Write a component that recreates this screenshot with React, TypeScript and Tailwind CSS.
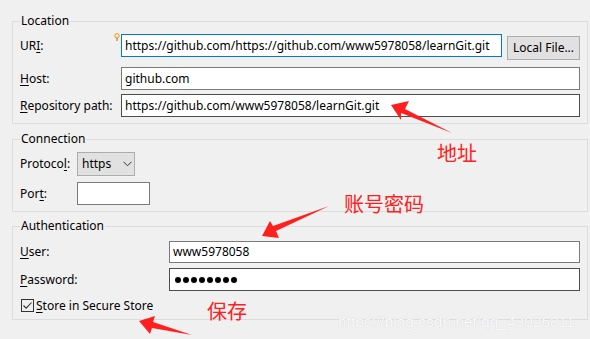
import React from "react";

const font = "font-['Noto_Sans','Noto_Sans_CJK_SC',sans-serif]";

function Label({ pre, u, post, w }: { pre?: string; u: string; post?: string; w: string }) {
  return (
    <div className={`${w} shrink-0 text-[12px] leading-[16px] text-black`}>
      {pre}
      <span className="underline underline-offset-2">{u}</span>
      {post}
    </div>
  );
}

function Input({ value, w, h = "h-[23px]", border = "border-[#7a7a7a]", children }: { value?: string; w: string; h?: string; border?: string; children?: React.ReactNode }) {
  return (
    <div className={`${w} ${h} border ${border} bg-white flex items-center pl-[3px] text-[12px] text-black whitespace-nowrap overflow-hidden`}>
      {value}
      {children}
    </div>
  );
}

export default function App() {
  return (
    <div className={`relative w-[590px] h-[339px] bg-[#f0f0f0] overflow-hidden ${font}`}>
      <div className="flex flex-col pl-[12px]">
        {/* Location */}
        <fieldset className="w-[576px] mt-[13px] border border-[#dcdcdc] px-[7px] pb-[6px]">
          <legend className="px-[1px] text-[12px] leading-[16px] text-black">Location</legend>
          <div className="flex items-start mt-[5px]">
            <div className="h-[23px] flex items-center">
              <Label pre="UR" u="I" post=":" w="w-[101px]" />
            </div>
            <Input value="https://github.com/https://github.com/www5978058/learnGit.git" w="w-[381px]" border="border-[#0078d7]" />
            <div className="ml-[5px] mt-[2px] w-[73px] h-[24px] bg-[#e1e1e1] border border-[#adadad] flex items-center justify-center text-[12px] text-black">
              Local File...
            </div>
          </div>
          <div className="flex items-center mt-[7px]">
            <Label u="H" post="ost:" w="w-[101px]" />
            <Input value="github.com" w="w-[459px]" />
          </div>
          <div className="flex items-center mt-[4px]">
            <Label u="R" post="epository path:" w="w-[101px]" />
            <Input value="https://github.com/www5978058/learnGit.git" w="w-[459px]" border="border-[#4d4d4d]" />
          </div>
        </fieldset>

        {/* Connection */}
        <fieldset className="w-[576px] mt-[7px] border border-[#dcdcdc] px-[7px] pb-[6px]">
          <legend className="px-[1px] text-[12px] leading-[16px] text-black">Connection</legend>
          <div className="flex items-center mt-[5px]">
            <Label pre="Protoco" u="l" post=":" w="w-[57px]" />
            <div className="w-[58px] h-[24px] bg-[#e1e1e1] border border-[#adadad] flex items-center pl-[4px] text-[12px] text-black">
              <span>https</span>
              <svg className="ml-[12px]" width="9" height="6" viewBox="0 0 9 6">
                <path d="M0.5 0.8 L4.5 4.8 L8.5 0.8" fill="none" stroke="#333" strokeWidth="1" />
              </svg>
            </div>
          </div>
          <div className="flex items-center mt-[6px]">
            <Label pre="Por" u="t" post=":" w="w-[57px]" />
            <Input w="w-[73px]" />
          </div>
        </fieldset>

        {/* Authentication */}
        <fieldset className="w-[576px] mt-[6px] border border-[#dcdcdc] px-[7px] pb-[7px]">
          <legend className="px-[1px] text-[12px] leading-[16px] text-black">Authentication</legend>
          <div className="flex items-center mt-[7px]">
            <Label u="U" post="ser:" w="w-[149px]" />
            <Input value="www5978058" w="w-[411px]" h="h-[22px]" />
          </div>
          <div className="flex items-center mt-[5px]">
            <Label u="P" post="assword:" w="w-[149px]" />
            <Input w="w-[411px]" border="border-[#4d4d4d]">
              <div className="flex gap-[2px] ml-[2px]">
                {Array.from({ length: 8 }).map((_, i) => (
                  <span key={i} className="w-[6px] h-[6px] rounded-full bg-black" />
                ))}
              </div>
            </Input>
          </div>
          <div className="flex items-center mt-[8px] h-[13px]">
            <div className="ml-[1px] w-[13px] h-[13px] border border-[#333] bg-[#f0f0f0] flex items-center justify-center">
              <svg width="11" height="11" viewBox="0 0 11 11">
                <path d="M1.5 5.5 L4.2 8.2 L9.5 2.5" fill="none" stroke="#333" strokeWidth="1.1" />
              </svg>
            </div>
            <div className="ml-[2px] text-[12px] leading-[16px] text-black">
              <span className="underline underline-offset-2">S</span>tore in Secure Store
            </div>
          </div>
        </fieldset>
      </div>

      {/* lightbulb decoration */}
      <svg className="absolute left-[114px] top-[33px]" width="6" height="9" viewBox="0 0 6 9">
        <circle cx="3" cy="2.8" r="2.2" fill="#fff3d0" stroke="#e8921c" strokeWidth="1" />
        <path d="M3 5 V8" stroke="#c97a14" strokeWidth="1.2" />
      </svg>

      {/* annotations */}
      <svg className="absolute left-0 top-0 pointer-events-none" width="590" height="339">
        <polygon points="391,105 409,101 405,109 452,133 401,113 401,120" fill="#ff1f1f" />
        <polygon points="262,236 270,221 273,226 329,206 276,231 279,238" fill="#ff1f1f" />
        <polygon points="139,321 155,316 153,322 192,335 152,328 150,334" fill="#ff1f1f" />
      </svg>
      <div className="absolute left-[437px] top-[140px] text-[20px] leading-[26px] text-[#ff2020] font-['Noto_Sans_CJK_SC',sans-serif]">地址</div>
      <div className="absolute left-[344px] top-[191px] text-[20px] leading-[26px] text-[#ff2020] font-['Noto_Sans_CJK_SC',sans-serif]">账号密码</div>
      <div className="absolute left-[207px] top-[298px] text-[20px] leading-[26px] text-[#ff2020] font-['Noto_Sans_CJK_SC',sans-serif]">保存</div>
      <div className="absolute left-[338px] top-[313px] text-[15.5px] leading-[18px] text-[#fafafa] font-['Liberation_Sans',sans-serif] [text-shadow:0_0_1px_#c8c8c8]">
        https://blog.csdn.net/qq_43026811
      </div>
    </div>
  );
}
